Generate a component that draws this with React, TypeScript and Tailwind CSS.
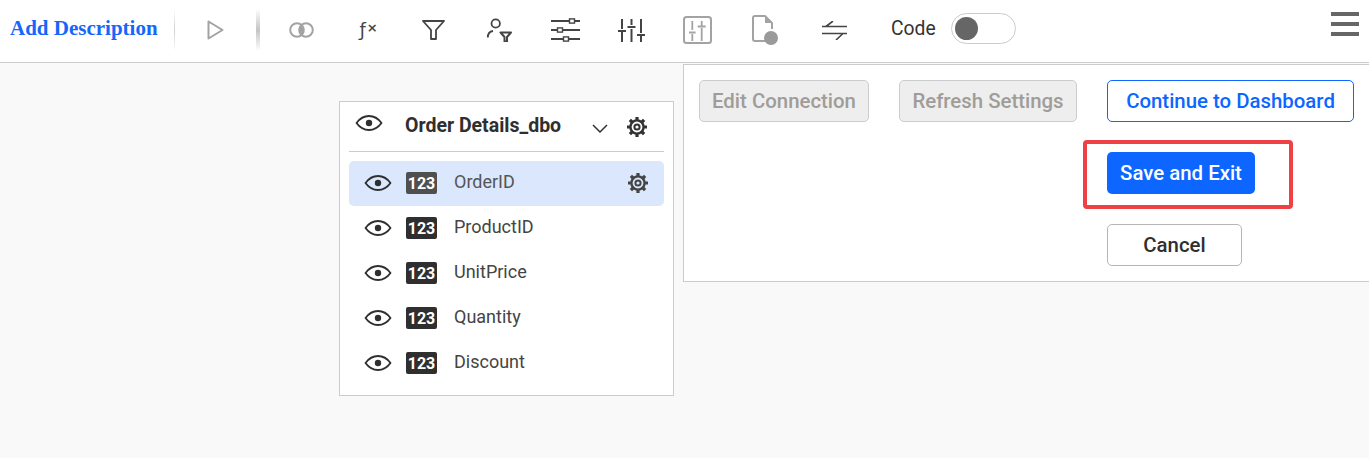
import React from 'react';

const Eye = () => (
    <svg width="28" height="16" viewBox="0 0 28 16" fill="none" stroke="#2f2f2f" strokeWidth="1.8">
        <path d="M1.5 8C5 3.2 9 1 14 1s9 2.2 12.5 7C23 12.8 19 15 14 15S5 12.8 1.5 8Z" strokeLinejoin="round" />
        <circle cx="14" cy="8" r="3.2" fill="#2f2f2f" stroke="none" />
    </svg>
);

const Gear = ({ color = '#333333' }: { color?: string }) => (
    <svg width="22" height="22" viewBox="0 0 22 22" fill="none" stroke={color}>
        <circle cx="11" cy="11" r="6.6" strokeWidth="2.4" />
        <circle cx="11" cy="11" r="2.6" strokeWidth="2" />
        <g strokeWidth="3.2">
            <path d="M11 1v3M11 18v3M1 11h3M18 11h3M3.9 3.9 6 6M16 16l2.1 2.1M3.9 18.1 6 16M16 6l2.1-2.1" />
        </g>
    </svg>
);

const Badge = ({ muted }: { muted?: boolean }) => (
    <span
        className={`flex h-[22px] w-[31px] items-center justify-center rounded-[2px] pt-px text-[16px] font-bold leading-none text-white ${muted ? 'bg-[#4f4f4f]' : 'bg-[#2f2f2f]'}`}
    >
        123
    </span>
);

const fields = ['OrderID', 'ProductID', 'UnitPrice', 'Quantity', 'Discount'];

export default function App() {
    return (
        <div className="flex h-[458px] flex-col overflow-hidden bg-[#f9f9f9] font-['Roboto',sans-serif] text-[#333333]">
            {/* Toolbar */}
            <div className="flex h-[63px] shrink-0 items-center border-b border-[#cccccc] bg-white pb-[2px]">
                <span className="mb-[2px] ml-[10px] w-[147px] whitespace-nowrap font-['Liberation_Serif',serif] text-[21px] font-bold text-[#1467fa]">
                    Add Description
                </span>
                <div className="ml-[17px] h-[42px] w-px bg-linear-to-b from-transparent via-[#cfcfcf] to-transparent" />
                <div className="flex w-[81px] justify-center">
                    <svg width="17" height="20" viewBox="0 0 17 20" fill="none" stroke="#a3a3a3" strokeWidth="2">
                        <path d="M1.5 1.5v17L15.5 10Z" strokeLinejoin="round" />
                    </svg>
                </div>
                <div className="h-[42px] w-[4px] bg-linear-to-b from-transparent via-[#c4c4c4] to-transparent" />
                <div className="ml-2 flex w-[66px] justify-center">
                    <svg width="25" height="16" viewBox="0 0 25 16" fill="none" stroke="#a3a3a3" strokeWidth="2">
                        <path d="M12.5 3.2a6.8 6.8 0 0 1 0 9.6 6.8 6.8 0 0 1 0-9.6Z" fill="#a3a3a3" stroke="none" />
                        <circle cx="8" cy="8" r="6.8" />
                        <circle cx="17" cy="8" r="6.8" />
                    </svg>
                </div>
                <div className="flex w-[66px] justify-center">
                    <span className="ml-[3px] font-['DejaVu_Sans',sans-serif] text-[18px] leading-none text-[#444444]">
                        ƒ<span className="ml-px align-[4px] text-[13px] font-bold">×</span>
                    </span>
                </div>
                <div className="flex w-[66px] justify-center">
                    <svg width="23" height="20" viewBox="0 0 23 20" fill="none" stroke="#444444" strokeWidth="1.8">
                        <path d="M1 1h21l-8 9v9h-5v-9Z" strokeLinejoin="round" />
                    </svg>
                </div>
                <div className="flex w-[66px] justify-center">
                    <svg width="26" height="24" viewBox="0 0 26 24" fill="none" stroke="#444444" strokeWidth="1.8">
                        <circle cx="9.7" cy="5.5" r="4.2" />
                        <path d="M1.8 19.5c0-3.5 2-6 5.2-6.5" />
                        <path d="M14.5 14.5h10.5l-4 4.5v4.5h-2.5V19Z" strokeWidth="2" strokeLinejoin="round" />
                    </svg>
                </div>
                <div className="flex w-[66px] justify-center">
                    <svg width="29" height="24" viewBox="0 0 29 24" fill="none" stroke="#444444" strokeWidth="1.8">
                        <path d="M0 3h18M24 3h5M0 12h6M12 12h17M0 21h12M18 21h11" />
                        <rect x="18.5" y="0.9" width="5" height="4.2" strokeWidth="1.4" />
                        <rect x="6.5" y="9.9" width="5" height="4.2" strokeWidth="1.4" />
                        <rect x="12.5" y="18.9" width="5" height="4.2" strokeWidth="1.4" />
                    </svg>
                </div>
                <div className="flex w-[66px] justify-center">
                    <svg width="29" height="25" viewBox="0 0 29 25" fill="none" stroke="#444444" strokeWidth="2">
                        <path d="M5 1v10M1 13h8M5 13v11" />
                        <path d="M14.5 1v6M10.5 9h8M14.5 11v13" />
                        <path d="M24 1v14M20 17h8M24 17v7" />
                    </svg>
                </div>
                <div className="flex w-[66px] justify-center">
                    <svg width="29" height="28" viewBox="0 0 29 28" fill="none" stroke="#a3a3a3" strokeWidth="1.8">
                        <rect x="1" y="1" width="27" height="26" rx="2.5" strokeWidth="2" />
                        <path d="M9.3 5v9M6 16.5h6.6M9.3 18v7M18.7 5v5M14.7 10.5h8M18.7 12v13" />
                    </svg>
                </div>
                <div className="flex w-[70px] justify-center">
                    <svg width="27" height="30" viewBox="0 0 27 30" fill="none" stroke="#a3a3a3" strokeWidth="2">
                        <path d="M13 26H3a2 2 0 0 1-2-2V3a2 2 0 0 1 2-2h10l7 7v6" strokeLinejoin="round" />
                        <path d="M13 1l7 7h-7Z" fill="#a3a3a3" stroke="none" />
                        <circle cx="19" cy="23" r="7" fill="#9a9a9a" stroke="none" />
                    </svg>
                </div>
                <div className="flex w-[68px] justify-center">
                    <svg width="25" height="19" viewBox="0 0 25 19" fill="none" stroke="#444444" strokeWidth="1.6">
                        <path d="M0 5.5h25M11 0 4 5.5M0 12.5h25M14 19l7-6.5" />
                    </svg>
                </div>
                <span className="mb-px ml-[23px] w-[60px] text-[19.3px] text-[#333333]">Code</span>
                <div className="mb-[3px] flex h-[31px] w-[65px] items-center rounded-full border border-[#cccccc] bg-white pl-[3px]">
                    <span className="h-[23px] w-[23px] rounded-full bg-[#666666]" />
                </div>
                <div className="ml-auto mr-[10px] mb-[12px] flex w-[28px] flex-col gap-[6px]">
                    <span className="h-[4px] bg-[#666666]" />
                    <span className="h-[4px] bg-[#666666]" />
                    <span className="h-[4px] bg-[#666666]" />
                </div>
            </div>

            <div className="flex flex-1 items-start pl-[339px]">
                {/* Table card */}
                <div className="mt-[38px] h-[295px] w-[335px] border border-[#cccccc] bg-white px-[9px]">
                    <div className="flex h-[50px] items-center border-b border-[#cccccc]">
                        <div className="mb-[8px] ml-[6px] w-[50px]">
                            <Eye />
                        </div>
                        <span className="mb-px w-[187px] whitespace-nowrap text-[19.5px] font-bold text-[#2f2f2f]">Order Details_dbo</span>
                        <svg width="16" height="9" viewBox="0 0 16 9" fill="none" stroke="#333333" strokeWidth="1.5" className="mt-[4px]">
                            <path d="M1 1l7 7 7-7" />
                        </svg>
                        <div className="ml-[18px]">
                            <Gear />
                        </div>
                    </div>
                    <div className="mt-[9px] flex flex-col">
                        {fields.map((name, idx) => (
                            <div
                                key={name}
                                className={`flex h-[45px] items-center rounded-[5px] pl-[15px] ${idx === 0 ? 'bg-[#dae7fd]' : ''}`}
                            >
                                <div className="mb-px">
                                    <Eye />
                                </div>
                                <div className="mb-px ml-[14px]">
                                    <Badge muted={idx === 0} />
                                </div>
                                <span className={`mb-[5px] ml-[17px] text-[18px] ${idx === 0 ? 'text-[#555555]' : 'text-[#444444]'}`}>{name}</span>
                                {idx === 0 && (
                                    <div className="mb-px ml-auto mr-[15px]">
                                        <Gear color="#444444" />
                                    </div>
                                )}
                            </div>
                        ))}
                    </div>
                </div>

                {/* Actions panel */}
                <div className="ml-[9px] mt-px flex h-[218px] flex-1 flex-col border border-r-0 border-[#cccccc] bg-white pl-[15px] pt-[15px]">
                    <div className="flex">
                        <button className="h-[42px] w-[170px] rounded-[5px] border border-[#cccccc] bg-[#eeeeee] text-[20.4px] font-medium text-[#a09c98]">
                            Edit Connection
                        </button>
                        <button className="ml-[30px] h-[42px] w-[178px] rounded-[5px] border border-[#cccccc] bg-[#eeeeee] text-[20.4px] font-medium text-[#a09c98]">
                            Refresh Settings
                        </button>
                        <button className="ml-[30px] h-[42px] w-[247px] rounded-[5px] border border-[#0d66ff] bg-white text-[20.4px] font-medium text-[#0d66ff]">
                            Continue to Dashboard
                        </button>
                    </div>
                    <div className="ml-[408px] mt-[30px] flex flex-col items-start gap-[30px]">
                        <div className="relative">
                            <button className="h-[42px] w-[148px] rounded-[5px] bg-[#0d66ff] text-[20.4px] font-medium text-white">
                                Save and Exit
                            </button>
                            <div className="absolute left-[-24px] top-[-12px] h-[69px] w-[210px] rounded-[4px] border-[4px] border-[#ef4044]" />
                        </div>
                        <button className="h-[42px] w-[135px] rounded-[5px] border border-[#b5b5b5] bg-white text-[20.4px] font-medium text-[#2f2f2f]">
                            Cancel
                        </button>
                    </div>
                </div>
            </div>
        </div>
    );
}
